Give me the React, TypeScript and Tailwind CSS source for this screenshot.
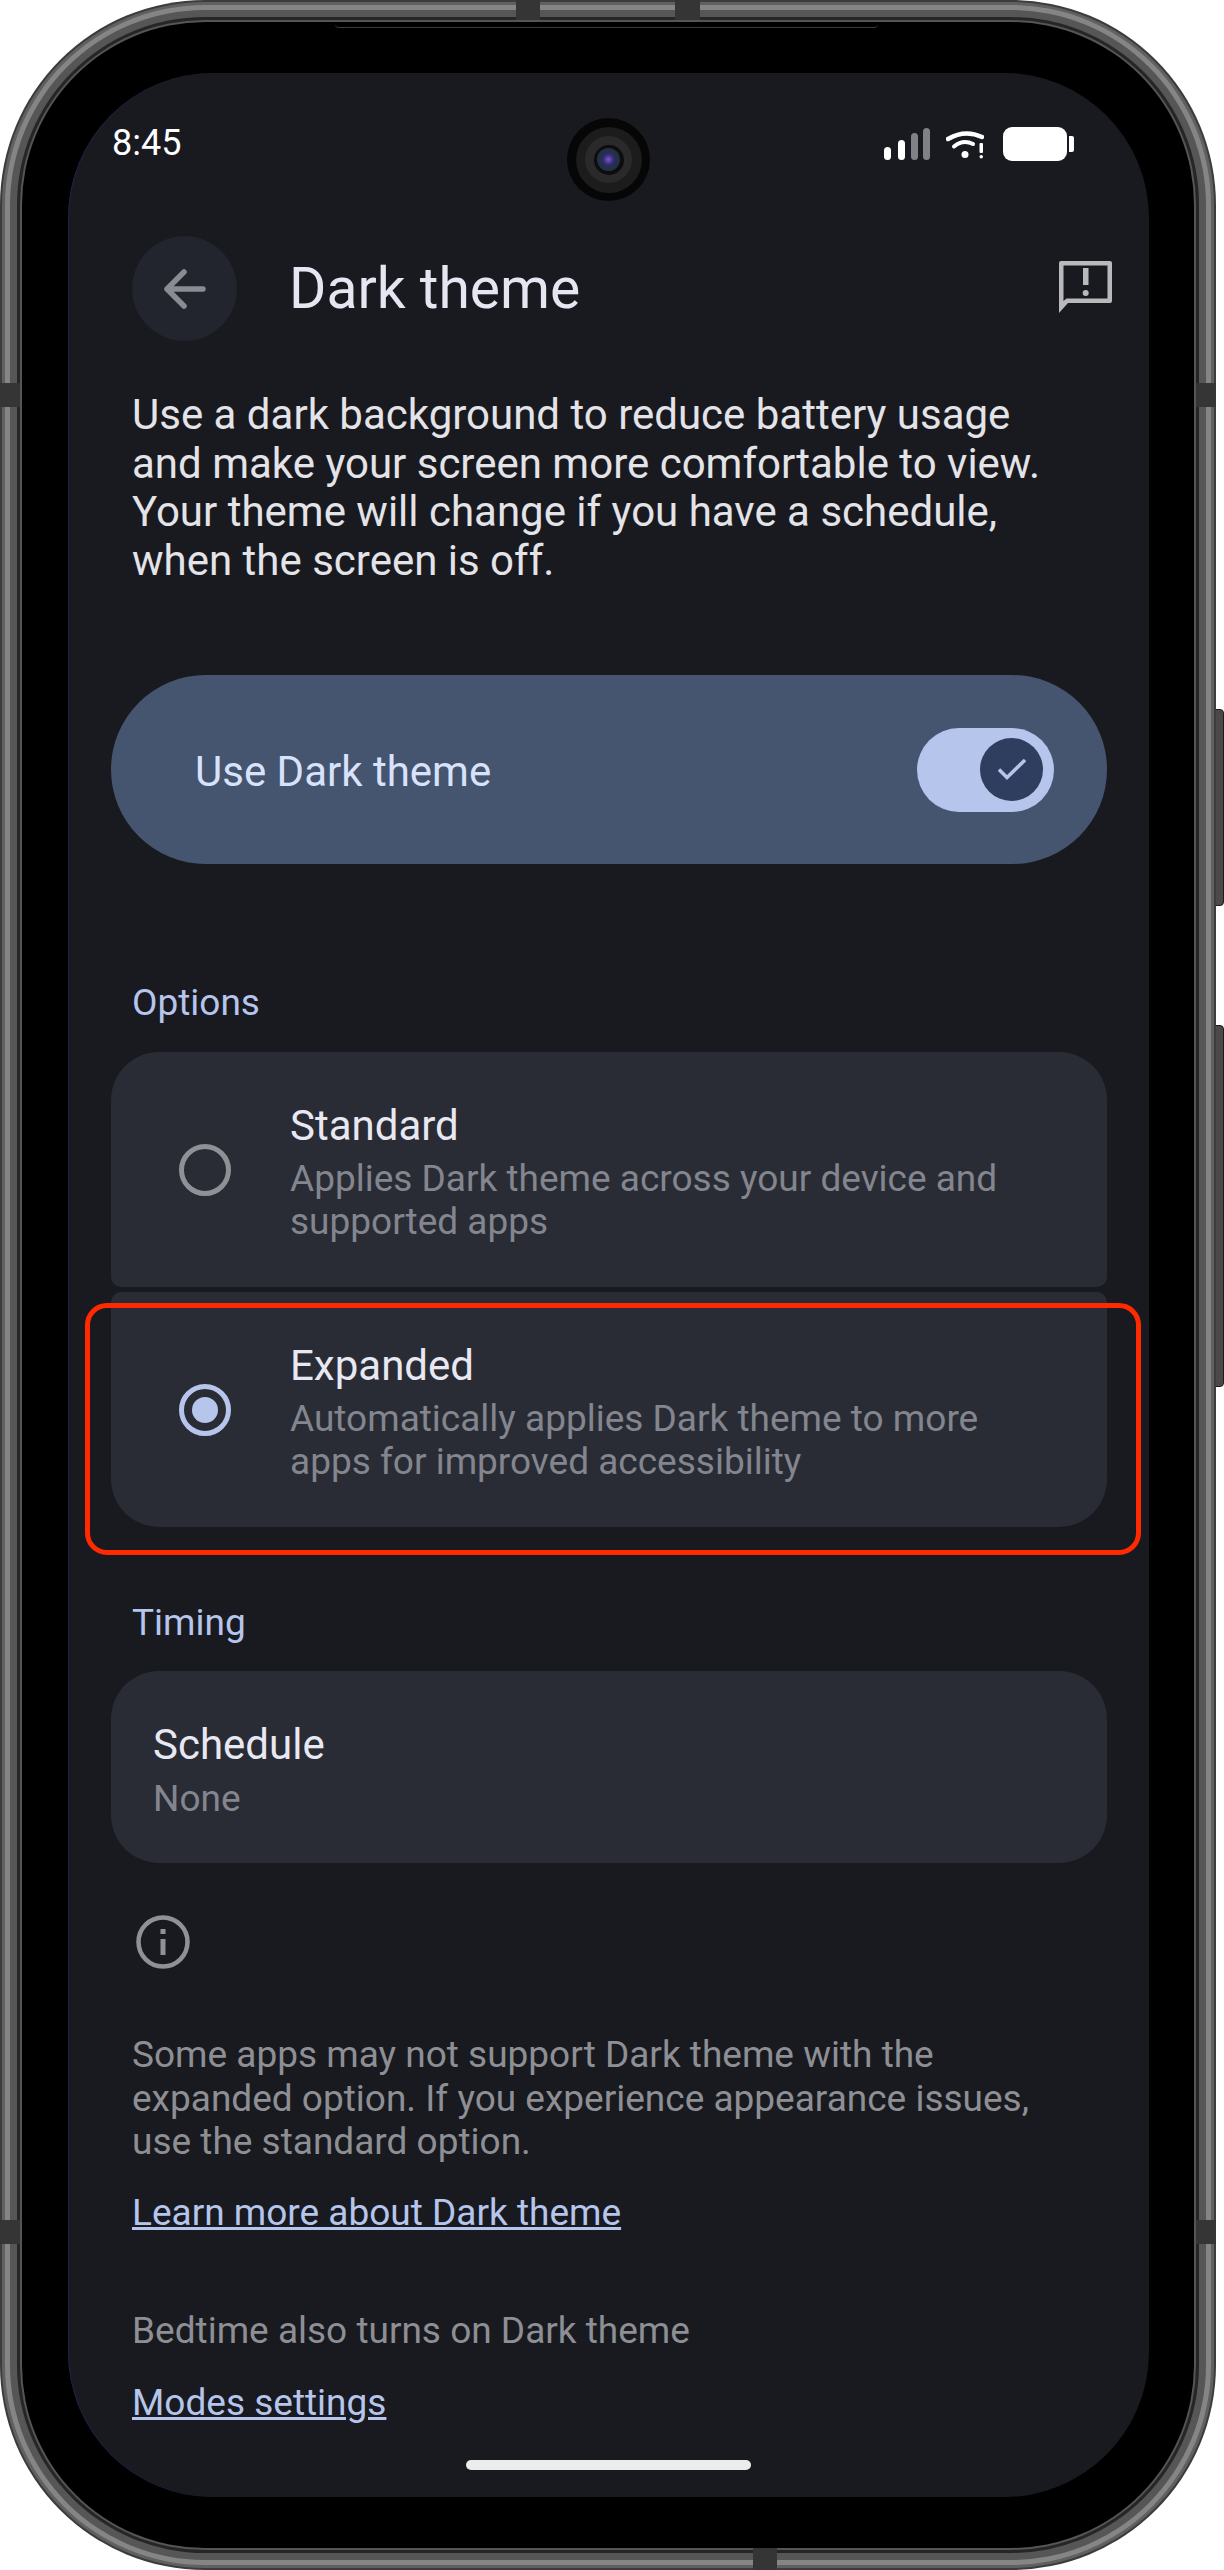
// recreating the dark theme settings screen inside a phone frame
import React from "react";

const font = "font-['Roboto',sans-serif]";

const SideBand = ({ className }: { className: string }) => (
  <div className={`absolute bg-[#353535] ${className}`} />
);

const StatusBar = () => (
  <div className="flex h-[88px] shrink-0 items-start justify-between pl-[44px] pr-[75px] pt-[54px]">
    <span className="-mt-[2px] text-[36px] leading-[36px] text-white">8:45</span>
    <div className="flex items-center">
      <svg width="46" height="32" viewBox="0 0 46 32" className="mr-[16px]">
        <rect x="0" y="19" width="7" height="13" rx="3.5" fill="#ffffff" />
        <rect x="14" y="12" width="7" height="20" rx="3.5" fill="#ffffff" />
        <rect x="27" y="5" width="7" height="27" rx="3.5" fill="#808186" />
        <rect x="39" y="0" width="7" height="32" rx="3.5" fill="#808186" />
      </svg>
      <svg width="38" height="30" viewBox="0 0 38 30" className="mr-[19px]">
        <path d="M2 10Q19 0 36 8" stroke="#fff" strokeWidth="4.5" fill="none" strokeLinecap="round" />
        <path d="M8 17.5Q17 10 27 15" stroke="#fff" strokeWidth="4" fill="none" strokeLinecap="round" />
        <circle cx="19" cy="25.5" r="3.5" fill="#fff" />
        <rect x="33.5" y="14" width="3.5" height="10" rx="1" fill="#fff" />
        <rect x="33.5" y="26" width="3.5" height="3.5" rx="1.7" fill="#fff" />
      </svg>
      <div className="h-[34px] w-[64px] rounded-[9px] bg-white" />
      <div className="ml-[2px] h-[16px] w-[5px] rounded-r-[2px] bg-white" />
    </div>
  </div>
);

const Header = () => (
  <div className="mt-[75px] flex h-[105px] shrink-0 items-center pl-[64px] pr-[37px]">
    <div className="flex h-[105px] w-[105px] items-center justify-center rounded-full bg-[#22252d]">
      <svg width="42" height="40" viewBox="0 0 42 40" fill="none" stroke="#8a8c92" strokeWidth="5.5" strokeLinecap="round" strokeLinejoin="round">
        <path d="M39 20H3M20 3L3 20l17 17" />
      </svg>
    </div>
    <h1 className="ml-[52px] flex-1 text-[57px] leading-[66px] font-normal text-[#e6e6f2]">Dark theme</h1>
    <svg width="53" height="52" viewBox="0 0 53 52" className="-mt-[3px]">
      <path fillRule="evenodd" d="M2 0H51Q53 0 53 2V40Q53 42 51 42H9L0 52V2Q0 0 2 0ZM4.500 4.500V40L7.500 37.500H48.500V4.500Z" fill="#b9b9bc" />
      <rect x="24" y="7" width="5.500" height="17" fill="#b9b9bc" />
      <circle cx="26.700" cy="32" r="3" fill="#b9b9bc" />
    </svg>
  </div>
);

const OptionCard = ({
  title,
  lines,
  selected,
  rounded,
}: {
  title: string;
  lines: string[];
  selected?: boolean;
  rounded: string;
}) => (
  <div className={`flex h-[235px] items-center bg-[#2a2c35] pl-[68px] ${rounded}`}>
    {selected ? (
      <div className="flex h-[52px] w-[52px] shrink-0 items-center justify-center rounded-full border-[5.5px] border-[#b6c5ec]">
        <div className="h-[26px] w-[26px] rounded-full bg-[#b6c5ec]" />
      </div>
    ) : (
      <div className="h-[52px] w-[52px] shrink-0 rounded-full border-[5.5px] border-[#8f9197]" />
    )}
    <div className="ml-[59px] pt-[3px]">
      <div className="mb-[5.5px] text-[42px] leading-[52px] text-[#e8e8f3]">{title}</div>
      {lines.map((line) => (
        <div key={line} className="text-[37px] leading-[43px] text-[#83868e]">
          {line}
        </div>
      ))}
    </div>
  </div>
);

export default function App() {
  return (
    <div className={`relative h-[2570px] w-[1224px] bg-white ${font}`}>
      {/* side buttons */}
      <div className="absolute right-0 top-[709px] h-[197px] w-[14px] rounded-r-[4px] border border-[#1c1c1c] bg-[#4a4a4a]" />
      <div className="absolute right-0 top-[1025px] h-[362px] w-[14px] rounded-r-[4px] border border-[#1c1c1c] bg-[#4a4a4a]" />

      {/* phone body, nested rings give the metal edge */}
      <div className="relative h-[2570px] w-[1216px] rounded-[205px] bg-[#3c3c3c] p-[2px]">
        <div className="h-full rounded-[203px] bg-[#606060] p-[3px]">
          <div className="h-full rounded-[200px] bg-[#858585] p-[5px]">
            <div className="h-full rounded-[195px] bg-[#565656] p-[7px]">
              <div className="h-full rounded-[188px] bg-[#262626] p-[3px]">
                <div className="h-full rounded-[185px] bg-[#555555] p-[2px]">
                  <div className="h-full rounded-[183px] bg-black pb-[51px] pl-[46px] pr-[45px] pt-[51px]">
                    {/* screen */}
                    <div className="flex h-full flex-col overflow-hidden rounded-[145px] bg-[#181a1f] shadow-[inset_1px_0_0_#20204a]">
                      <StatusBar />
                      <Header />

                      <div className="pl-[64px] pt-[50px] text-[42px] leading-[48.6px] text-[#e3e3e8]">
                        <p>Use a dark background to reduce battery usage</p>
                        <p>and make your screen more comfortable to view.</p>
                        <p>Your theme will change if you have a schedule,</p>
                        <p>when the screen is off.</p>
                      </div>

                      <div className="ml-[43px] mr-[42px] mt-[90px] flex h-[189px] shrink-0 items-center justify-between rounded-full bg-[#45556f] pl-[84px] pr-[53px]">
                        <span className="pt-[4px] text-[42px] text-[#d9e2fb]">Use Dark theme</span>
                        <div className="flex h-[84px] w-[137px] items-center justify-end rounded-full bg-[#b6c5ec] pr-[11px]">
                          <div className="flex h-[63px] w-[63px] items-center justify-center rounded-full bg-[#2f3e5f]">
                            <svg width="28" height="21" viewBox="0 0 28 21" fill="none" stroke="#b6c5ec" strokeWidth="3.5">
                              <path d="M1 10.500l8 8L27 1" />
                            </svg>
                          </div>
                        </div>
                      </div>

                      <div className="mt-[119px] pl-[64px] text-[37px] leading-[40px] text-[#b6c5ec]">Options</div>

                      <div className="ml-[43px] mr-[42px] mt-[29px] flex flex-col gap-[5px]">
                        <OptionCard
                          title="Standard"
                          lines={["Applies Dark theme across your device and", "supported apps"]}
                          rounded="rounded-t-[48px] rounded-b-[10px]"
                        />
                        <OptionCard
                          title="Expanded"
                          lines={["Automatically applies Dark theme to more", "apps for improved accessibility"]}
                          selected
                          rounded="rounded-t-[10px] rounded-b-[48px]"
                        />
                      </div>

                      <div className="mt-[76px] pl-[64px] text-[37px] leading-[40px] text-[#b6c5ec]">Timing</div>

                      <div className="ml-[43px] mr-[42px] mt-[28px] flex h-[192px] shrink-0 flex-col justify-center rounded-[48px] bg-[#2a2c35] pl-[42px] pt-[4px]">
                        <div className="mb-[5.5px] text-[42px] leading-[52px] text-[#e8e8f3]">Schedule</div>
                        <div className="text-[37px] leading-[43px] text-[#83868e]">None</div>
                      </div>

                      <div className="ml-[68px] mt-[52px]">
                        <svg width="54" height="54" viewBox="0 0 54 54" className="block">
                          <circle cx="27" cy="27" r="24.500" fill="none" stroke="#8f9199" strokeWidth="4.500" />
                          <rect x="24.500" y="24" width="5" height="16" fill="#8f9199" />
                          <rect x="24.500" y="14" width="5" height="5" fill="#8f9199" />
                        </svg>
                      </div>

                      <div className="pl-[64px] pt-[64px] text-[37px] leading-[43.5px] text-[#8e8f95]">
                        <p>Some apps may not support Dark theme with the</p>
                        <p>expanded option. If you experience appearance issues,</p>
                        <p>use the standard option.</p>
                      </div>

                      <div className="mt-[27.5px] pl-[64px] text-[37px] leading-[43px] text-[#b6c5ec] underline">Learn more about Dark theme</div>

                      <div className="mt-[75px] pl-[64px] text-[37px] leading-[43px] text-[#8e8f95]">Bedtime also turns on Dark theme</div>

                      <div className="mt-[29px] pl-[64px] text-[37px] leading-[43px] text-[#b6c5ec] underline">Modes settings</div>

                      {/* gesture pill */}
                      <div className="mx-auto mt-[35.5px] h-[10px] w-[285px] shrink-0 rounded-full bg-[#ececec]" />
                    </div>
                  </div>
                </div>
              </div>
            </div>
          </div>
        </div>

        {/* earpiece line under the top edge */}
        <div className="absolute left-[335px] top-[22px] h-[6px] w-[543px] rounded-b-[4px] border-b border-[#3a3a3a] bg-black" />

        {/* antenna bands */}
        <SideBand className="left-[516px] top-0 h-[20px] w-[24px]" />
        <SideBand className="left-[675px] top-0 h-[20px] w-[25px]" />
        <SideBand className="bottom-0 left-[753px] h-[22px] w-[24px]" />
        <SideBand className="left-0 top-[383px] h-[24px] w-[20px]" />
        <SideBand className="left-0 top-[2220px] h-[24px] w-[20px]" />
        <SideBand className="right-0 top-[383px] h-[24px] w-[20px]" />
        <SideBand className="right-0 top-[2220px] h-[24px] w-[20px]" />

        {/* camera cutout */}
        <div className="absolute left-[567px] top-[118px] flex h-[83px] w-[83px] items-center justify-center rounded-full bg-[#060606]">
          <div className="flex h-[66px] w-[66px] items-center justify-center rounded-full bg-[#1c1c1c]">
            <div className="flex h-[47px] w-[47px] items-center justify-center rounded-full bg-[#2a2a2a]">
              <div className="flex h-[30px] w-[30px] items-center justify-center rounded-full bg-[#0d0d10]">
                <div className="h-[23px] w-[23px] rounded-full bg-[radial-gradient(circle,#7a50e0_0%,#2c2c5c_35%,#22303e_70%,#14181e_100%)]" />
              </div>
            </div>
          </div>
        </div>

        {/* red highlight */}
        <div className="absolute left-[85px] top-[1303px] h-[252px] w-[1056px] rounded-[22px] border-[5px] border-[#ff2a00]" />
      </div>
    </div>
  );
}
